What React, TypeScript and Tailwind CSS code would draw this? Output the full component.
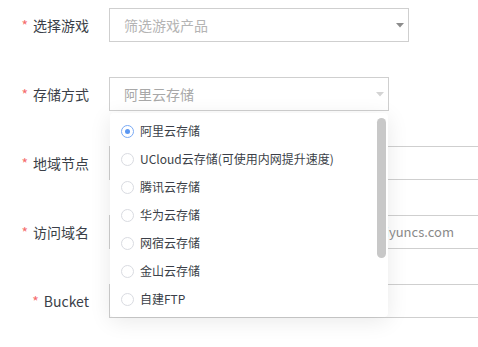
const options = [
  "阿里云存储",
  "UCloud云存储(可使用内网提升速度)",
  "腾讯云存储",
  "华为云存储",
  "网宿云存储",
  "金山云存储",
  "自建FTP",
];

const Label = ({ text }: { text: string }) => (
  <div className="w-[89px] shrink-0 text-right text-[14px] text-[#3b3f48]">
    <span className="mr-[5px] text-[#f56c6c]">*</span>
    {text}
  </div>
);

const Caret = ({ color }: { color: string }) => (
  <svg width="8" height="5" viewBox="0 0 8 5" className="shrink-0">
    <path d="M0 0 L8 0 L4 4.5 Z" fill={color} />
  </svg>
);

export default function App() {
  const selected = 0;
  return (
    <div className="relative h-[347px] w-[478px] overflow-hidden bg-white font-['Noto_Sans_CJK_SC','Noto_Sans',sans-serif]">
      <div className="flex flex-col gap-[35px] pt-[8px]">
        <div className="flex h-[34px] items-center">
          <Label text="选择游戏" />
          <div className="ml-[20px] flex h-[34px] w-[300px] shrink-0 items-center justify-between border border-[#cfcfcf] pl-[14px] pr-[4px]">
            <span className="text-[14px] text-[#b4b4b4]">筛选游戏产品</span>
            <Caret color="#8c8c8c" />
          </div>
        </div>

        <div className="flex h-[34px] items-center">
          <Label text="存储方式" />
          <div className="ml-[20px] flex h-[34px] w-[280px] shrink-0 items-center justify-between border border-[#cfcfcf] pl-[14px] pr-[4px]">
            <span className="text-[14px] text-[#a8a8a8]">阿里云存储</span>
            <Caret color="#d4d4d4" />
          </div>
        </div>

        <div className="flex h-[34px] items-center">
          <Label text="地域节点" />
          <div className="ml-[20px] h-[34px] w-[420px] shrink-0 border border-[#cfcfcf]" />
        </div>

        <div className="flex h-[34px] items-center">
          <Label text="访问域名" />
          <div className="ml-[20px] flex h-[34px] w-[420px] shrink-0 items-center border border-[#cfcfcf] pl-[28px]">
            <span className="whitespace-nowrap text-[13px] text-[#8a8a8a]">
              https://bucket-name.oss-cn-hangzhou.aliyuncs.com
            </span>
          </div>
        </div>

        <div className="flex h-[34px] items-center">
          <Label text="Bucket" />
          <div className="ml-[20px] h-[34px] w-[420px] shrink-0 border border-[#cfcfcf]" />
        </div>
      </div>

      {/* dropdown */}
      <div className="absolute left-[110px] top-[113px] w-[278px] rounded-[4px] bg-white py-[4px] shadow-[0_4px_22px_rgba(0,0,0,0.09)]">
        {options.map((o, i) => (
          <div key={o} className="flex h-[28px] items-center pl-[11px]">
            <span
              className={`flex h-[13px] w-[13px] shrink-0 items-center justify-center rounded-full border ${
                i === selected ? "border-[#7aaaf5]" : "border-[#d9dbe1]"
              }`}
            >
              {i === selected && <span className="h-[5px] w-[5px] rounded-full bg-[#5a97f2]" />}
            </span>
            <span className="ml-[6px] whitespace-nowrap text-[12px] text-[#3b3f48]">{o}</span>
          </div>
        ))}
        <div className="absolute right-[2px] top-[5px] h-[140px] w-[9px] rounded-full bg-[#c8c8c8]" />
      </div>
    </div>
  );
}
